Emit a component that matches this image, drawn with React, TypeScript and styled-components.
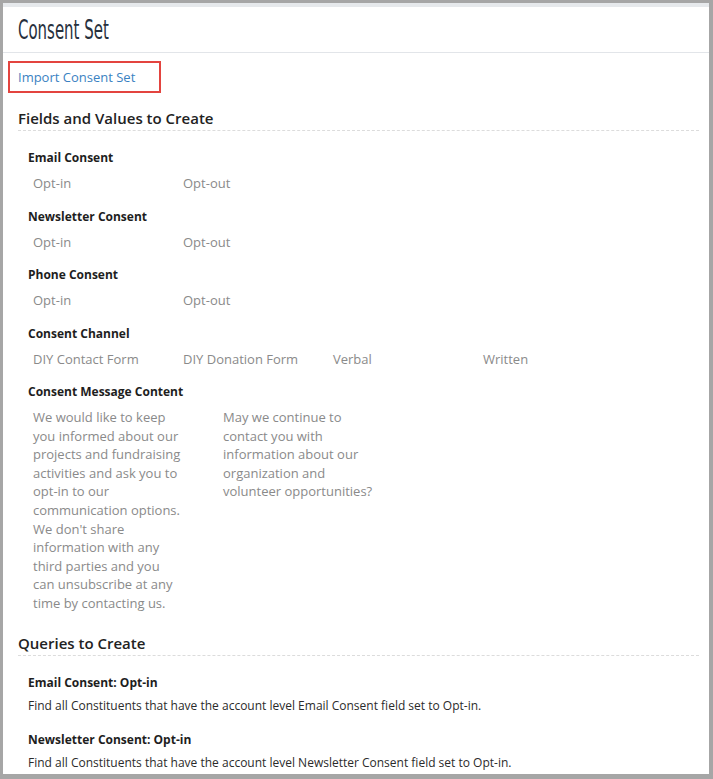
import React from "react";
import styled, { createGlobalStyle } from "styled-components";

const GlobalStyle = createGlobalStyle`
  html, body {
    margin: 0;
    padding: 0;
    background: #a6a6a6;
  }
  body {
    padding: 3px 4px 5px 3px;
    font-family: "Open Sans", "Liberation Sans", sans-serif;
  }
`;

const Panel = styled.div`
  height: 771px;
  overflow: hidden;
  background: #ffffff;
  border-top: 4px solid #e6e9ec;
  box-sizing: border-box;
`;

const Header = styled.div`
  height: 45px;
  border-bottom: 1px solid #e2e5e9;
  display: flex;
  align-items: center;
  padding-left: 15px;
`;

const Title = styled.h1`
  margin: 0;
  font-family: "Liberation Sans Narrow", "DejaVu Sans Condensed", sans-serif;
  font-weight: 400;
  font-size: 26px;
  color: #27303d;
  transform: scaleX(0.64);
  transform-origin: left center;
`;

const Body = styled.div`
  padding: 8px 10px 0 5px;
`;

const ImportBox = styled.div`
  width: 153px;
  height: 32px;
  box-sizing: border-box;
  border: 2px solid #e3443f;
  display: flex;
  align-items: center;
  padding-left: 8px;
`;

const Link = styled.a`
  font-size: 13px;
  color: #3a82c2;
  text-decoration: none;
  cursor: pointer;
`;

const SectionTitle = styled.h2<{ $top: number }>`
  margin: ${(p) => p.$top}px 0 0 10px;
  font-size: 15px;
  line-height: 20px;
  font-weight: 600;
  color: #222;
  padding-bottom: 2px;
  border-bottom: 1px dashed #dcdcdc;
`;

const Group = styled.div<{ $top: number }>`
  margin: ${(p) => p.$top}px 0 0 20px;
`;

const Label = styled.div`
  font-size: 12px;
  font-weight: 700;
  line-height: 18px;
  color: #1e1e1e;
`;

const ValueRow = styled.div`
  display: flex;
  margin-top: 6px;
  padding-left: 5px;
`;

const Value = styled.div`
  width: 150px;
  font-size: 13px;
  line-height: 20px;
  color: #8a8a8a;
`;

const MessageRow = styled.div`
  display: flex;
  gap: 40px;
  margin-top: 7px;
  padding-left: 5px;
`;

const Message = styled.div`
  width: 150px;
  font-size: 13px;
  line-height: 18.6px;
  color: #8a8a8a;
`;

const Query = styled.div<{ $top: number }>`
  margin: ${(p) => p.$top}px 0 0 20px;
`;

const QueryText = styled.div`
  margin-top: 4px;
  font-size: 12px;
  line-height: 20px;
  color: #2b2b2b;
`;

const fields = [
  { label: "Email Consent", values: ["Opt-in", "Opt-out"] },
  { label: "Newsletter Consent", values: ["Opt-in", "Opt-out"] },
  { label: "Phone Consent", values: ["Opt-in", "Opt-out"] },
  {
    label: "Consent Channel",
    values: ["DIY Contact Form", "DIY Donation Form", "Verbal", "Written"],
  },
];

const messages = [
  "We would like to keep you informed about our projects and fundraising activities and ask you to opt-in to our communication options. We don't share information with any third parties and you can unsubscribe at any time by contacting us.",
  "May we continue to contact you with information about our organization and volunteer opportunities?",
];

const queries = [
  {
    name: "Email Consent: Opt-in",
    text: "Find all Constituents that have the account level Email Consent field set to Opt-in.",
  },
  {
    name: "Newsletter Consent: Opt-in",
    text: "Find all Constituents that have the account level Newsletter Consent field set to Opt-in.",
  },
];

export default function App() {
  return (
    <>
      <GlobalStyle />
      <Panel>
        <Header>
          <Title>Consent Set</Title>
        </Header>
        <Body>
          <ImportBox>
            <Link>Import Consent Set</Link>
          </ImportBox>

          <SectionTitle $top={15}>Fields and Values to Create</SectionTitle>
          {fields.map((f, i) => (
            <Group key={f.label} $top={i === 0 ? 18 : 14.5}>
              <Label>{f.label}</Label>
              <ValueRow>
                {f.values.map((v) => (
                  <Value key={v}>{v}</Value>
                ))}
              </ValueRow>
            </Group>
          ))}
          <Group $top={14.5}>
            <Label>Consent Message Content</Label>
            <MessageRow>
              {messages.map((m, i) => (
                <Message key={i}>{m}</Message>
              ))}
            </MessageRow>
          </Group>

          <SectionTitle $top={20}>Queries to Create</SectionTitle>
          {queries.map((q, i) => (
            <Query key={q.name} $top={i === 0 ? 18 : 15}>
              <Label>{q.name}</Label>
              <QueryText>{q.text}</QueryText>
            </Query>
          ))}
        </Body>
      </Panel>
    </>
  );
}
